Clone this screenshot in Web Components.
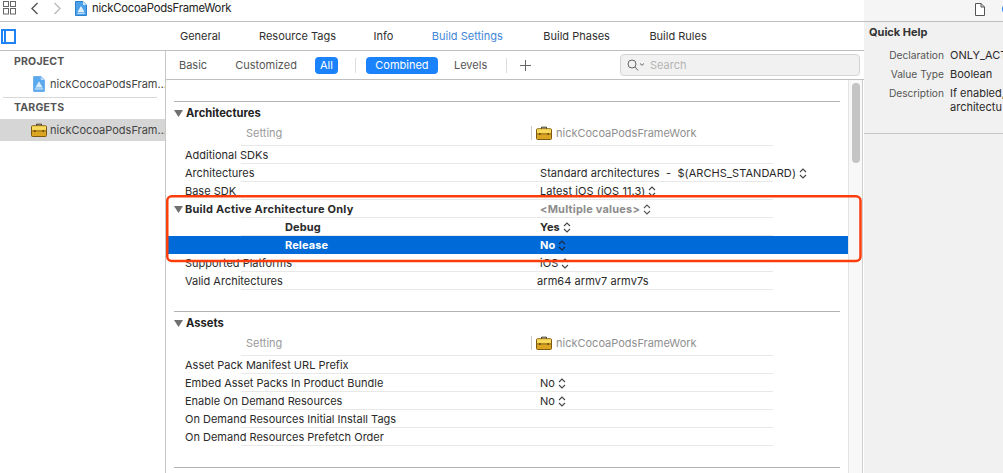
<!DOCTYPE html>
<html lang="en"><head><meta charset="utf-8"><title>Build Settings</title>
<style>
html,body{margin:0;padding:0;background:#fff}
body{width:1003px;height:473px;overflow:hidden;font-family:Inter,"Liberation Sans",sans-serif;color:#2a2a2a}
</style></head><body>
<xc-app>
  <xc-toolbar slot="toolbar" title-text="nickCocoaPodsFrameWork"></xc-toolbar>
  <xc-tabs slot="tabs"></xc-tabs>
  <xc-sidebar slot="sidebar"></xc-sidebar>
  <xc-filterbar slot="filter"></xc-filterbar>
  <xc-scroll slot="main">
    <xc-section name="Architectures">
      <xc-row name="Additional SDKs"></xc-row>
      <xc-row name="Architectures" value="Standard architectures  -  $(ARCHS_STANDARD)" stepper></xc-row>
      <xc-row name="Base SDK" value="Latest iOS (iOS 11.3)" stepper></xc-row>
      <xc-row name="Build Active Architecture Only" value="&lt;Multiple values&gt;" stepper kind="group"></xc-row>
      <xc-row name="Debug" value="Yes" stepper kind="child"></xc-row>
      <xc-row name="Release" value="No" stepper kind="selected"></xc-row>
      <xc-row name="Supported Platforms" value="iOS" stepper></xc-row>
      <xc-row name="Valid Architectures" value="arm64 armv7 armv7s" kind="list"></xc-row>
    </xc-section>
    <xc-section name="Assets">
      <xc-row name="Asset Pack Manifest URL Prefix"></xc-row>
      <xc-row name="Embed Asset Packs In Product Bundle" value="No" stepper></xc-row>
      <xc-row name="Enable On Demand Resources" value="No" stepper></xc-row>
      <xc-row name="On Demand Resources Initial Install Tags"></xc-row>
      <xc-row name="On Demand Resources Prefetch Order"></xc-row>
    </xc-section>
    <xc-rule></xc-rule>
  </xc-scroll>
  <xc-help slot="help"></xc-help>
</xc-app>
<script>
const esc = s => String(s).replace(/&/g,'&amp;').replace(/</g,'&lt;').replace(/>/g,'&gt;');
const TOOLBOX = (w,h)=>`<svg width="${w}" height="${h}" viewBox="0 0 16 14" style="display:block;flex:none">
<path d="M5.500 3V1.200h5V3" fill="none" stroke="#3a3320" stroke-width="1"/>
<rect x=".5" y="2.800" width="15" height="10.700" rx="1" fill="#e6b32c" stroke="#7d5a12"/>
<rect x="1" y="3.300" width="14" height="3.600" fill="#f8da5e"/>
<path d="M.8 8h14.400" stroke="#8a6414" stroke-width="1"/>
<rect x="3" y="7" width="1.600" height="2.200" fill="#6f5010"/><rect x="11.400" y="7" width="1.600" height="2.200" fill="#6f5010"/>
<rect x="1" y="9" width="14" height="4" fill="#dca521"/></svg>`;
const PROJECT = `<svg width="12" height="16" viewBox="0 0 12 16" style="display:block;flex:none">
<path d="M.5 1.200a1 1 0 0 1 1-1h6.300L11.500 4v10.800a1 1 0 0 1-1 1h-9a1 1 0 0 1-1-1z" fill="#5aa9ee" stroke="#4a97e0" stroke-width=".6"/>
<path d="M7.800.4V4h3.600z" fill="#bcdcf8"/>
<path d="M2.400 11.500L6 5.200l3.600 6.300z" fill="#d8ecfc"/><path d="M1.800 12.400h8.400v1.100H1.800z" fill="#d8ecfc"/></svg>`;
const STEP = (c)=>`<svg width="8" height="11" viewBox="0 0 8 11" style="display:block;flex:none"><path d="M1 4l3-3 3 3M1 7l3 3 3-3" fill="none" stroke="${c}" stroke-width="1.100"/></svg>`;
const TRI = `<svg width="9" height="7" viewBox="0 0 9 7" style="display:block;flex:none"><path d="M0 0h9L4.500 7z" fill="#707070"/></svg>`;

function def(name, render){
  customElements.define(name, class extends HTMLElement{
    connectedCallback(){ if(this.shadowRoot) return; this.attachShadow({mode:'open'}).innerHTML = render(this); }
  });
}

def('xc-app',()=>`<style>
:host{display:block;position:relative;width:1003px;height:473px;overflow:hidden}
.grid{display:grid;grid-template-columns:864px 139px;height:473px}
.left{display:grid;grid-template-rows:22px 29px 1fr;min-height:0}
.body{display:grid;grid-template-columns:166px 698px;min-height:0}
.work{display:grid;grid-template-rows:29px 1fr;min-height:0}
.mark{position:absolute;left:165px;top:193px;pointer-events:none}
</style>
<div class="grid"><div class="left"><slot name="toolbar"></slot><slot name="tabs"></slot>
<div class="body"><slot name="sidebar"></slot><div class="work"><slot name="filter"></slot><slot name="main"></slot></div></div></div>
<slot name="help"></slot></div>
<svg class="mark" width="699" height="72" viewBox="0 0 699 72"><rect x="2.250" y="3.250" width="693.250" height="64.750" rx="4.500" fill="none" stroke="#fb3d0c" stroke-width="2.500"/></svg>`);

def('xc-toolbar',el=>`<style>
:host{display:flex;align-items:center;height:22px;box-sizing:border-box;border-bottom:1px solid #bfbfbf;background:#fff;padding:0 0 5px 3px;font-size:12px;color:#222}
span{margin-left:5px;font-size:11.300px;letter-spacing:-.23px}
</style>
<svg width="13" height="14" viewBox="0 0 13 14" style="flex:none"><g fill="none" stroke="#666" stroke-width="1"><rect x=".5" y=".5" width="5" height="5"/><rect x="7.500" y=".5" width="5" height="5"/><rect x=".5" y="7.500" width="5" height="5.500"/><rect x="7.500" y="7.500" width="5" height="5.500"/></g></svg>
<svg width="9" height="13" viewBox="0 0 9 13" style="flex:none;margin-left:14px"><path d="M7.500 1L2 6.500 7.500 12" fill="none" stroke="#555" stroke-width="1.400"/></svg>
<svg width="9" height="13" viewBox="0 0 9 13" style="flex:none;margin-left:14px"><path d="M1.500 1L7 6.500 1.500 12" fill="none" stroke="#bbb" stroke-width="1.400"/></svg>
<svg width="12" height="15" viewBox="0 0 12 15" style="flex:none;margin-left:13px"><path d="M.5.5h7.500L11.500 4v10.500H.5z" fill="#4da0ea" stroke="#2c7fcc"/><path d="M8 .5V4h3.500z" fill="#cfe6fa"/><path d="M2.500 11L6 5l3.500 6zM2.500 11.800h7v1h-7z" fill="#e3f1fd"/></svg>
<span>${esc(el.getAttribute('title-text'))}</span>`);

def('xc-tabs',()=>`<style>
:host{display:flex;align-items:center;height:29px;box-sizing:border-box;border-bottom:1px solid #bfbfbf;background:#fff;font-size:11px;color:#2f2f2f;padding-left:1px}
.toggle{width:15px;height:15px;box-sizing:border-box;border:2px solid #1f83f5;margin-right:164px;display:flex;flex:none}
.toggle i{display:block;width:2px;margin-left:1px;background:#1f83f5}
nav{display:flex;gap:38.500px}
.on{color:#3f87d9}
</style><div class="toggle"><i></i></div>
<nav><span>General</span><span>Resource Tags</span><span style="margin-left:-1px">Info</span><span class="on">Build Settings</span><span style="margin-left:2px">Build Phases</span><span style="margin-left:1px">Build Rules</span></nav>`);

def('xc-sidebar',()=>`<style>
:host{display:block;box-sizing:border-box;border-right:1px solid #c8c8c8;background:#fff;font-size:11px;color:#555;overflow:hidden}
h4{margin:0;font-size:10.500px;font-weight:700;color:#555;padding-left:14px;height:18px;line-height:18px;letter-spacing:.2px}
.p{margin-top:2px}
.row{display:flex;align-items:center;height:22px;white-space:nowrap;color:#444}
.row span{margin-left:5px}
.a{padding-left:33px;margin-top:2px}.b{padding-left:31px;background:#d6d6d6;margin-top:2px}
hr{margin:2px 8px 1px 3px;border:0;border-top:1px solid #d8d8d8}
</style><h4 class="p">PROJECT</h4><div class="row a">${PROJECT}<span>nickCocoaPodsFram…</span></div><hr>
<h4>TARGETS</h4><div class="row b">${TOOLBOX(16,14)}<span style="margin-left:3px">nickCocoaPodsFram…</span></div>`);

def('xc-filterbar',()=>`<style>
:host{display:flex;align-items:center;height:29px;box-sizing:border-box;border-bottom:1px solid #bfbfbf;background:#fff;font-size:11px;color:#555;padding-left:13px}
.pill{background:#1a82fb;color:#fff;border-radius:4px;height:17px;line-height:17px;text-align:center;box-sizing:border-box}
.sep{width:1px;height:15px;background:#ddd;flex:none}
.search{margin-left:auto;margin-right:4px;width:240px;height:22px;box-sizing:border-box;border:1px solid #d4d4d4;border-radius:4px;background:#f1f1f1;display:flex;align-items:center;padding-left:6px;color:#b4b4b4}
</style>
<span>Basic</span><span style="margin-left:28px">Customized</span>
<div class="pill" style="margin-left:18px;width:23px">All</div><div class="sep" style="margin-left:17px"></div>
<div class="pill" style="margin-left:10px;width:72px">Combined</div><span style="margin-left:16px">Levels</span>
<div class="sep" style="margin-left:19px"></div>
<svg width="13" height="13" viewBox="0 0 13 13" style="margin-left:12px;flex:none"><path d="M6.500 1v11M1 6.500h11" stroke="#666" stroke-width="1"/></svg>
<div class="search"><svg width="18" height="12" viewBox="0 0 18 12" style="flex:none"><circle cx="5" cy="5" r="4" fill="none" stroke="#666" stroke-width="1"/><path d="M8 8l3 3.500M13 4.500l2 1.800 2-1.800" fill="none" stroke="#666" stroke-width="1"/></svg><span style="margin-left:5px">Search</span></div>`);

def('xc-scroll',()=>`<style>
:host{display:grid;grid-template-columns:682px 15px;min-height:0;overflow:hidden;background:#fff}
.c{padding:21px 0 0 2px;overflow:hidden}
.t{border-left:1px solid #e4e4e4;border-right:1px solid #cfcfcf;background:#f8f8f8;padding:3px 3px 0 3px}
.t i{display:block;height:80px;width:8px;border-radius:4px;background:#c4c4c4}
</style><div class="c"><slot></slot></div><div class="t"><i></i></div>`);

def('xc-section',el=>`<style>
:host{display:block;margin-bottom:21px}
.line{height:1px;background:#b3b3b3;margin:0 8px 0 6px}
.head{display:flex;align-items:center;height:22px;padding-left:6px;font-size:11.200px;font-weight:700;color:#222}
.head span{margin-left:3px}
.set{display:flex;align-items:center;height:22px;box-sizing:border-box;font-size:11px;color:#9a9a9a;
 background:linear-gradient(#e8e8e8,#e8e8e8) 73px 100%/532px 1px no-repeat;padding-left:78px;padding-bottom:4px}
.tg{margin-left:auto;width:317px;display:flex;align-items:center;color:#8f8f8f}
.bar{width:1px;height:14px;background:#ccc;margin-right:4px}
.tg span{margin-left:4px}
</style><div class="line"></div>
<div class="head">${TRI}<span>${esc(el.getAttribute('name'))}</span></div>
<div class="set"><span>Setting</span><div class="tg"><div class="bar"></div>${TOOLBOX(16,14)}<span>nickCocoaPodsFrameWork</span></div></div>
<slot></slot>`);

def('xc-row',el=>{
 const k=el.getAttribute('kind')||'', v=el.getAttribute('value'), st=el.hasAttribute('stepper');
 const sel=k==='selected', bold=k==='group'||k==='child'||sel;
 const ind=(k==='child'||sel)?117:17;
 const ls=k==='group'?'.23px':(bold?'.1px':'0');
 return `<style>
:host{display:flex;align-items:center;height:18px;box-sizing:border-box;font-size:11px;width:680px;white-space:pre;
 color:${sel?'#fff':'#2a2a2a'};font-weight:${bold?700:400};
 background:${sel?'#006bd8':'linear-gradient(#e8e8e8,#e8e8e8) 73px 100%/532px 1px no-repeat'}}
.n{width:${372-ind}px;padding-left:${ind}px;flex:none;letter-spacing:${ls}}
.v{display:flex;align-items:center;gap:3px;letter-spacing:${k==='group'?'.2px':'.07px'};${k==='list'?'margin-left:-3px;':''}${k==='group'?'color:#8c8c8c;':''}}
.tri{position:relative;width:0}
.tri svg{position:absolute;left:6px;top:-3px}
</style>${k==='group'?`<span class="tri">${TRI}</span>`:''}<span class="n">${esc(el.getAttribute('name'))}</span>
${v?`<span class="v"><span>${esc(v)}</span>${st?STEP(sel?'#1c2a44':k==='group'?'#555':'#444'):''}</span>`:''}`;
});

def('xc-rule',()=>`<style>:host{display:block;height:1px;background:#b3b3b3;margin:0 8px 0 6px}</style>`);

def('xc-help',()=>`<style>
:host{display:grid;grid-template-rows:22px 112px 1fr;background:#f1f1f1;font-size:11px;color:#2a2a2a;overflow:hidden;min-width:0;width:139px}
.top{display:flex;align-items:center;box-sizing:border-box;border-bottom:1px solid #bfbfbf;padding:0 0 3px 111px;background:#f5f5f5}
.q{box-sizing:border-box;border-bottom:1px solid #c6c6c6;padding:3px 0 0 5px;overflow:hidden;white-space:nowrap}
h3{margin:0 0 9px;font-size:11px;font-weight:700;color:#333;height:14px;line-height:14px}
dl{margin:0;display:grid;grid-template-columns:74px 1fr;column-gap:6px;margin-left:1px;line-height:14px;row-gap:5px}
dt{text-align:right;color:#555;font-size:10.200px}dd{margin:0;overflow:hidden}
</style>
<div class="top"><svg width="10" height="13" viewBox="0 0 10 13" style="flex:none"><path d="M.5.5h5.500L9.500 4v8.500H.5zM6 .5V4h3.500" fill="#fff" stroke="#555"/></svg>
<svg width="12" height="12" viewBox="0 0 12 12" style="flex:none;margin-left:17px"><circle cx="6" cy="6" r="6" fill="#1f83f5"/></svg></div>
<div class="q"><h3>Quick Help</h3><dl><dt>Declaration</dt><dd>ONLY_ACT</dd><dt>Value Type</dt><dd>Boolean</dd><dt>Description</dt><dd>If enabled,<br>architectu</dd></dl></div><div></div>`);
</script>
</body></html>
